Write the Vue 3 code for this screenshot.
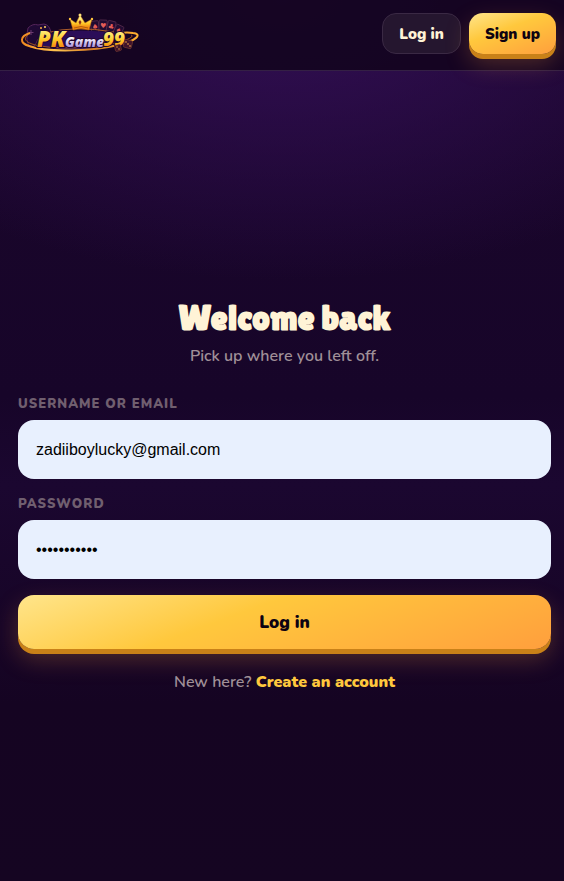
<script setup>
import { ref } from 'vue'

const username = ref('zadiiboylucky@gmail.com')
const password = ref('luckyplayer')

const cards = [
  { x: 71, y: 8, angle: -8, suit: '♠' },
  { x: 79, y: 7, angle: 2, suit: '♥' },
  { x: 87, y: 8, angle: 14, suit: '♣' },
  { x: 94, y: 12, angle: 26, suit: '♦' }
]
</script>

<template>
  <div class="page">
    <header class="topbar">
      <a href="#" class="brand" aria-label="PKGame99">
        <svg class="logo" width="120" height="42" viewBox="0 0 120 42">
          <defs>
            <linearGradient id="gold" x1="0" y1="0" x2="0" y2="1">
              <stop offset="0.2" stop-color="#fff38a" />
              <stop offset="0.55" stop-color="#ffc928" />
              <stop offset="0.8" stop-color="#f58a12" />
            </linearGradient>
            <linearGradient id="silver" x1="0" y1="0" x2="0" y2="1">
              <stop offset="0.3" stop-color="#ffffff" />
              <stop offset="0.8" stop-color="#a58bd8" />
            </linearGradient>
            <linearGradient id="ring" x1="0" y1="0" x2="1" y2="0">
              <stop offset="0" stop-color="#f08a20" />
              <stop offset="0.3" stop-color="#ffc550" />
              <stop offset="0.6" stop-color="#d47a24" />
              <stop offset="1" stop-color="#ffb030" />
            </linearGradient>
          </defs>

          <!-- controller -->
          <path d="M8 15 Q13 10 18 12 L24 11 Q30 12 31 20 L18 26 Q14 36 10 34 Q5 28 8 15Z" fill="#1f0934" stroke="#54245a" stroke-width="1" />
          <path d="M11 17v5M8.500 19.500h5" stroke="#6d3a70" stroke-width="1" />
          <circle cx="21" cy="15" r="1" fill="#ffad40" />
          <circle cx="25" cy="14" r="1" fill="#ffd266" />
          <circle cx="24" cy="18" r="1" fill="#ed8930" />

          <!-- cards -->
          <g v-for="card in cards" :key="card.x" :transform="`rotate(${card.angle} ${card.x + 4} ${card.y + 6})`">
            <rect :x="card.x" :y="card.y" width="8" height="13" rx="1" fill="#210b31" stroke="#5c3050" stroke-width="0.700" />
            <text :x="card.x + 1" :y="card.y + 8" class="suit">{{ card.suit }}</text>
          </g>

          <!-- rings -->
          <path d="M28 21 Q60 14 97 21 L90 33 Q50 40 20 33Z" fill="#2b0d58" />
          <path d="M10 20 C0 23 -1 30 9 33 C28 40 74 38 98 32 C116 28 123 21 113 20 Q107 19 101 20" fill="none" stroke="url(#ring)" stroke-width="2" />
          <path d="M8 22 C1 27 9 31 20 33 C45 37 82 35 106 27 Q115 23 111 22" fill="none" stroke="#b96118" stroke-width="0.800" />
          <path d="M26 20 Q54 12 94 19" fill="none" stroke="#ac5b2a" stroke-width="1" />

          <!-- crown -->
          <path d="M53 17 L50 6 L56 10 L60 2 L65 10 L72 6 L69 17 Q61 14 53 17Z" fill="url(#gold)" stroke="#c46d0e" stroke-width="0.500" />
          <path d="M54 15 Q61 12 68 15" fill="none" stroke="#b45d0b" stroke-width="1" />
          <circle cx="50" cy="6" r="1.200" fill="#ffc440" />
          <circle cx="60" cy="2" r="1.500" fill="#ffdf77" />
          <circle cx="72" cy="6" r="1.200" fill="#ffc440" />
          <path d="M60 7l1.500 2-1.500 3-1.500-3Z" fill="#8c2c1d" />

          <text x="17" y="34" class="word pk">PK</text>
          <text x="45" y="34" class="word game">Game</text>
          <text x="83" y="33" class="word nines">99</text>

          <!-- dice -->
          <rect x="95" y="32" width="6" height="6" rx="1" transform="rotate(-14 98 35)" fill="#40132b" stroke="#71382f" stroke-width="0.700" />
          <rect x="104" y="27" width="8" height="8" rx="1" transform="rotate(15 108 31)" fill="#40132b" stroke="#71382f" stroke-width="0.700" />
          <g fill="#f1a64a">
            <circle cx="97" cy="34" r="0.700" />
            <circle cx="99" cy="36" r="0.700" />
            <circle cx="106" cy="29" r="0.800" />
            <circle cx="108" cy="31" r="0.800" />
            <circle cx="110" cy="33" r="0.800" />
          </g>
        </svg>
      </a>
      <nav class="actions">
        <button type="button" class="btn btn-ghost">Log in</button>
        <button type="button" class="btn btn-gold">Sign up</button>
      </nav>
    </header>

    <main class="content">
      <h1 class="title">Welcome back</h1>
      <p class="subtitle">Pick up where you left off.</p>

      <form class="form" @submit.prevent>
        <div class="field">
          <label for="username">Username or email</label>
          <input id="username" v-model="username" type="text" autocomplete="username">
        </div>
        <div class="field">
          <label for="password">Password</label>
          <input id="password" v-model="password" type="password" autocomplete="current-password">
        </div>
        <button type="submit" class="btn btn-gold btn-large">Log in</button>
      </form>

      <p class="signup">New here? <a href="#">Create an account</a></p>
    </main>
  </div>
</template>

<style>
body {
  margin: 0;
  background: #150522;
}
</style>

<style scoped>
.page {
  min-height: 100vh;
  display: flex;
  flex-direction: column;
  box-sizing: border-box;
  background:
    radial-gradient(ellipse 90% 280px at 50% 0, #330f56 0%, rgba(51, 15, 86, 0) 100%),
    linear-gradient(#1b062c 0%, #170529 45%, #1b0730 55%, #150422 80%, #150522 100%);
  color: #fff3d6;
  font-family: Nunito, Lato, sans-serif;
}

.topbar {
  display: flex;
  justify-content: space-between;
  align-items: flex-start;
  padding: 13px 8px 15px 20px;
  border-bottom: 1px solid #342044;
  background: rgba(20, 4, 31, 0.92);
}

.brand,
.logo {
  display: block;
}

.word {
  font-family: "Open Sans", sans-serif;
  font-style: italic;
  font-weight: 800;
  paint-order: stroke;
  stroke: #22062d;
  stroke-width: 2px;
}

.pk {
  font-size: 22px;
  fill: url(#gold);
}

.game {
  font-size: 14px;
  fill: url(#silver);
}

.nines {
  font-size: 19px;
  fill: url(#gold);
}

.suit {
  font-family: "DejaVu Sans", sans-serif;
  font-size: 7px;
  fill: #e35d58;
}

.actions {
  display: flex;
  gap: 8px;
}

.btn {
  height: 41px;
  padding: 0 16px;
  border: 0;
  border-radius: 14px;
  font-family: inherit;
  font-size: 15px;
  font-weight: 900;
  cursor: pointer;
}

.btn-ghost {
  border: 1px solid #3a2944;
  background: #25162f;
  color: #fff3d6;
}

.btn-gold {
  background: linear-gradient(160deg, #ffe58b 0%, #ffc83d 40%, #ff9f3d 100%);
  box-shadow: 0 5px 0 #c98118, 0 10px 24px rgba(255, 159, 61, 0.25);
  color: #0e0312;
}

.content {
  flex: 1;
  display: flex;
  flex-direction: column;
  justify-content: center;
  padding: 40px 13px 0 18px;
}

.title {
  margin: 0;
  font-family: "Lilita One", Lato, sans-serif;
  font-size: 35px;
  font-weight: 900;
  line-height: 40px;
  text-align: center;
}

.subtitle {
  margin: 6px 0 27px;
  color: #a09098;
  font-size: 16px;
  font-weight: 600;
  line-height: 24px;
  text-align: center;
}

.form {
  display: flex;
  flex-direction: column;
  gap: 16px;
}

.field {
  display: flex;
  flex-direction: column;
  gap: 7px;
}

.field label {
  color: #705f6f;
  font-size: 13px;
  font-weight: 900;
  line-height: 18px;
  letter-spacing: 1px;
  text-transform: uppercase;
}

.field input {
  width: 100%;
  height: 59px;
  box-sizing: border-box;
  padding: 0 18px;
  border: 0;
  border-radius: 16px;
  background: #e8f0fe;
  color: #000;
  font-family: "Liberation Sans", Arial, sans-serif;
  font-size: 16px;
}

.btn-large {
  height: 54px;
  border-radius: 16px;
  font-size: 17px;
}

.signup {
  margin: 21px 0 0;
  color: #a09098;
  font-size: 16px;
  font-weight: 600;
  line-height: 24px;
  text-align: center;
}

.signup a {
  color: #ffc83d;
  font-weight: 900;
  text-decoration: none;
}
</style>
